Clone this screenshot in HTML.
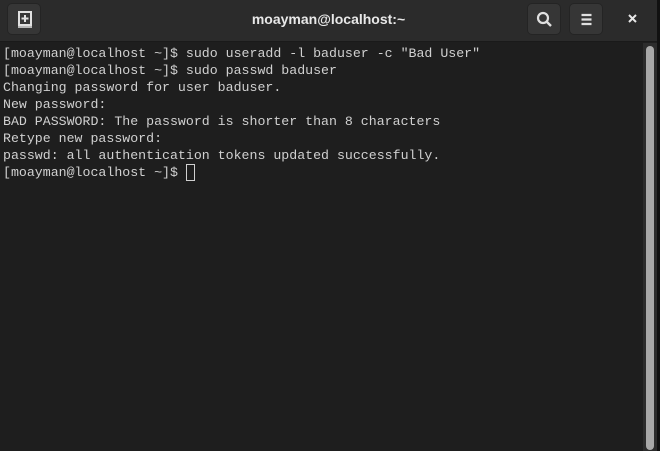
<!DOCTYPE html>
<html><head><style>
*{margin:0;padding:0;box-sizing:border-box}
body{width:660px;height:451px;background:#1e1e1e;position:relative;overflow:hidden;font-family:"Liberation Sans",sans-serif}
.hdr{position:absolute;left:0;top:0;width:657px;height:42px;background:#2b2b2b;border-bottom:1px solid #1a1a1a}
.btn{position:absolute;top:3px;width:34px;height:32px;background:#363636;border:1px solid #242424;border-radius:5px}
.title{position:absolute;left:0;width:657px;top:11px;text-align:center;color:#e8e8e8;font-weight:bold;font-size:14px}
.term{position:absolute;left:3px;top:45px;font-family:"Liberation Mono",monospace;font-size:13.25px;line-height:17px;color:#d0d0d0;white-space:pre}
.cur{display:inline-block;width:9px;height:17px;border:1px solid #d0d0d0;vertical-align:top}
.trough{position:absolute;left:643px;top:43px;width:14px;height:408px;background:#2c2c2c}
.thumb{position:absolute;left:646px;top:46px;width:8px;height:404px;background:#a8a8a8;border-radius:4px}
.edge{position:absolute;left:657px;top:0;width:3px;height:451px;background:#111}
</style></head><body>
<div class="hdr">
<div class="btn" style="left:7px"><svg width="34" height="32" viewBox="0 0 34 32"><rect x="11" y="8" width="12" height="13" fill="none" stroke="#e0e0e0" stroke-width="2"/><path d="M17 11v7M13.5 14.5h7" stroke="#e0e0e0" stroke-width="2"/><path d="M10 23h14" stroke="#e0e0e0" stroke-width="1.5"/></svg></div>
<div class="title">moayman@localhost:~</div>
<div class="btn" style="left:527px"><svg width="34" height="32" viewBox="0 0 34 32"><circle cx="15" cy="14" r="5" fill="none" stroke="#e0e0e0" stroke-width="2.2"/><path d="M18.5 17.5l4.5 4.5" stroke="#e0e0e0" stroke-width="2.4"/></svg></div>
<div class="btn" style="left:569px"><svg width="34" height="32" viewBox="0 0 34 32"><path d="M11.5 11h10M11.5 15.5h10M11.5 20h10" stroke="#e0e0e0" stroke-width="2.2"/></svg></div>
<svg style="position:absolute;left:625px;top:11px" width="16" height="16" viewBox="0 0 16 16"><path d="M4 4l7 7M11 4l-7 7" stroke="#e8e8e8" stroke-width="2"/></svg>
</div>
<div class="term">[moayman@localhost ~]$ sudo useradd -l baduser -c "Bad User"
[moayman@localhost ~]$ sudo passwd baduser
Changing password for user baduser.
New password:
BAD PASSWORD: The password is shorter than 8 characters
Retype new password:
passwd: all authentication tokens updated successfully.
[moayman@localhost ~]$ <span class="cur"></span></div>
<div class="trough"></div><div class="thumb"></div><div class="edge"></div>
</body></html>
